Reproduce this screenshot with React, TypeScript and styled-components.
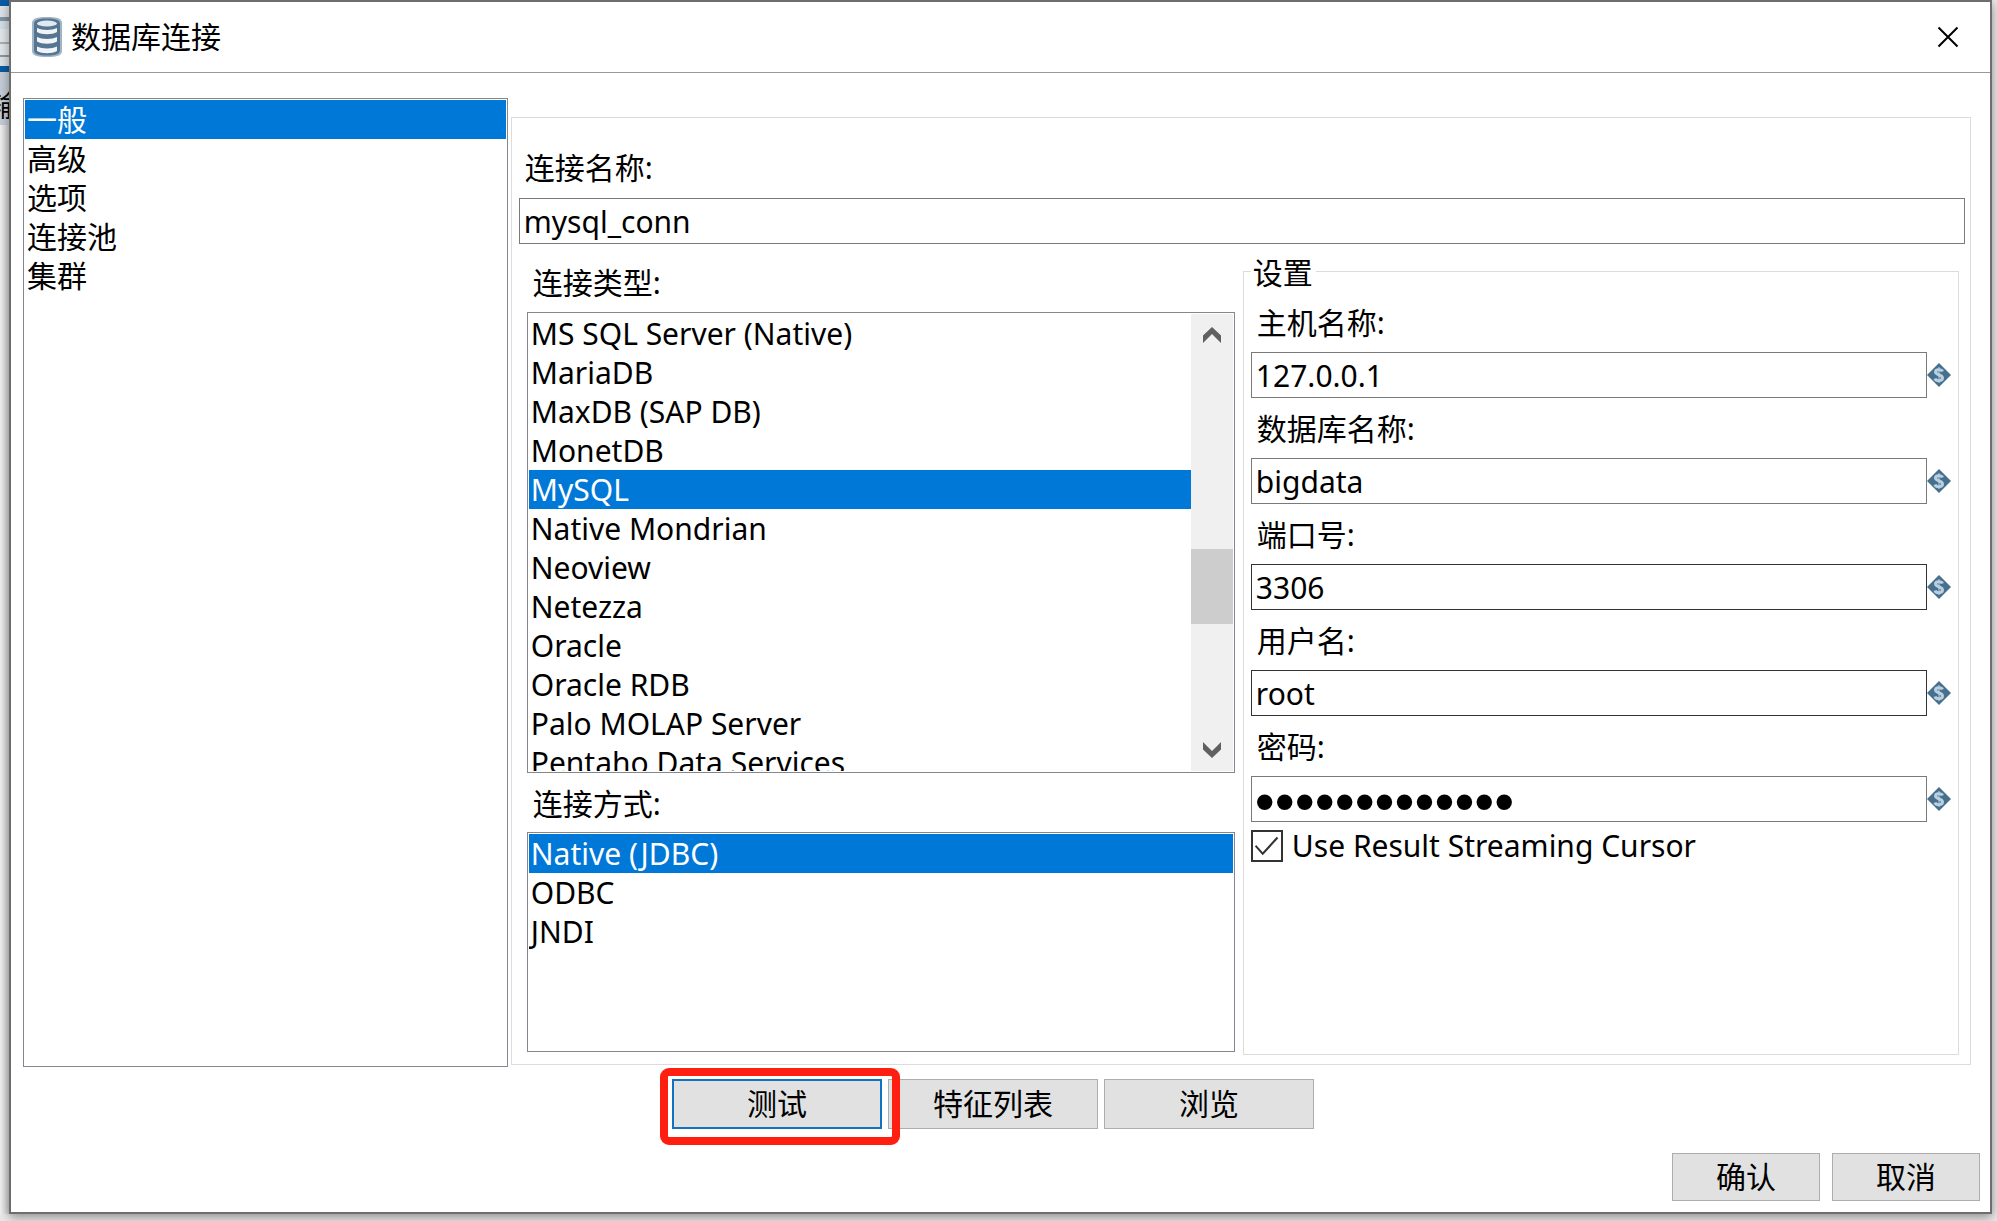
import React, { useState } from "react";
import styled, { createGlobalStyle } from "styled-components";

const GlobalStyle = createGlobalStyle`
  *, *::before, *::after { box-sizing: border-box; }
  html, body, #root { height: 100%; }
  body {
    margin: 0;
    background: #e9e9e9;
    color: #000;
    font: 30px/40px "Noto Sans", "Noto Sans CJK SC", sans-serif;
    overflow: hidden;
  }
  button, input { font: inherit; color: inherit; margin: 0; }
`;

const Desktop = styled.div`
  display: grid;
  grid-template-columns: 9px minmax(0, 1fr) 5px;
  height: 100vh;
  padding-bottom: 7px;
`;

const Behind = styled.div`
  overflow: hidden;
  background: linear-gradient(90deg, #f2f2f2, #cfcfcf);
`;

const RibbonEdge = styled.div`
  height: 72px;
  border-top: 6px solid #0a5ba3;
  border-bottom: 6px solid #0a5ba3;
  background: #dde3e8;
  padding-top: 11px;
`;

const RibbonCell = styled.div`
  height: 40px;
  border-top: 4px solid #8294a3;
  border-bottom: 2px solid #8a98a5;
  background: linear-gradient(#d3dee6 0 8px, #e4e7ea 8px 21px, #a8b0b8 21px 23px, #e4e7ea 23px);
`;

const BehindTab = styled.div`
  height: 53px;
  padding-top: 13px;
  background: #c4ced8;
  display: flex;
  justify-content: center;
  white-space: nowrap;
`;

const Dialog = styled.main`
  display: flex;
  flex-direction: column;
  min-width: 0;
  background: #fff;
  border: 2px solid #6e6e6e;
  box-shadow: 0 3px 10px rgba(0, 0, 0, 0.4);
  z-index: 1;
`;

const TitleBar = styled.header`
  display: flex;
  align-items: center;
  height: 71px;
  padding: 0 31px 0 21px;
  border-bottom: 1px solid #999;
`;

const Title = styled.h1`
  flex: 1;
  margin: 0 0 0 9px;
  font: inherit;
`;

const CloseButton = styled.button`
  display: flex;
  padding: 0;
  border: 0;
  background: none;
`;

const Body = styled.div`
  flex: 1;
  display: grid;
  grid-template-columns: 485fr 1461fr;
  gap: 3px;
  min-height: 0;
  padding: 25px 19px 0 12px;
`;

const ListBox = styled.div`
  display: flex;
  min-width: 0;
  min-height: 0;
  border: 1px solid #828790;
  padding: 1px;
`;

const TypeBox = styled(ListBox)`
  height: 461px;
`;

const MethodBox = styled(ListBox)`
  flex: 1;
`;

const Items = styled.ul`
  flex: 1;
  min-width: 0;
  margin: 0;
  padding: 0;
  list-style: none;
  overflow: hidden;
`;

const Item = styled.button<{ $on: boolean }>`
  display: block;
  width: 100%;
  height: 39px;
  padding: 0 2px;
  border: 0;
  line-height: 40px;
  text-align: left;
  white-space: nowrap;
  background: ${(p) => (p.$on ? "#0078d7" : "transparent")};
  color: ${(p) => (p.$on ? "#fff" : "#000")};
`;

const ScrollBar = styled.div`
  flex: 0 0 42px;
  display: flex;
  flex-direction: column;
  background: #f0f0f0;
`;

const ScrollButton = styled.button`
  display: flex;
  align-items: center;
  justify-content: center;
  width: 42px;
  height: 42px;
  padding: 0;
  border: 0;
  background: none;
`;

const Track = styled.div`
  flex: 1;
  display: grid;
  grid-template-rows: 193fr 75fr 105fr;
`;

const Thumb = styled.div`
  grid-row: 2;
  background: #cdcdcd;
`;

const Panel = styled.section`
  min-width: 0;
  display: flex;
  flex-direction: column;
  margin: 19px 0 2px;
  padding: 30px 5px 9px 7px;
  border: 1px solid #dcdcdc;
`;

const Caption = styled.label`
  display: block;
  height: 40px;
  padding-left: 6px;
`;

const Heading = styled.div`
  height: 40px;
  padding-left: 6px;
`;

const TextInput = styled.input<{ $dark?: boolean }>`
  flex: 1;
  width: 100%;
  min-width: 0;
  height: 46px;
  padding: 0 4px;
  border: 1px solid ${(p) => (p.$dark ? "#333" : "#7a7a7a")};
  border-radius: 0;
  background: #fff;
  outline: none;
  &[type="password"] {
    padding: 4px 3px 0;
    font: 57px/40px "Liberation Sans", sans-serif;
  }
`;

const NameField = styled.div`
  display: flex;
  flex-direction: column;
  gap: 10px;
  height: 96px;
`;

const Columns = styled.div`
  flex: 1;
  min-height: 0;
  display: grid;
  grid-template-columns: 708fr 716fr;
  gap: 8px;
  padding: 0 6px 0 8px;
`;

const Connection = styled.div`
  display: flex;
  flex-direction: column;
  min-width: 0;
  min-height: 0;
  padding: 19px 0 3px;
`;

const ConnectionLabel = styled(Heading)`
  margin-bottom: 9px;
`;

const MethodLabel = styled(Heading)`
  margin: 11px 0 8px;
`;

const Settings = styled.fieldset`
  min-width: 0;
  margin: 7px 0 0;
  padding: 12px 7px 0;
  border: 1px solid #dcdcdc;
`;

const Legend = styled.legend`
  height: 40px;
  padding: 2px 3px 0 2px;
`;

const FieldList = styled.div`
  display: grid;
  gap: 11px;
`;

const FieldRow = styled.div`
  display: flex;
  align-items: center;
  margin-top: 9px;
`;

const VariableButton = styled.button`
  display: flex;
  padding: 0;
  border: 0;
  background: none;
`;

const CheckRow = styled.label`
  display: flex;
  align-items: center;
  gap: 9px;
  height: 40px;
  margin-top: 4px;
`;

const CheckBox = styled.input`
  appearance: none;
  flex: none;
  width: 32px;
  height: 32px;
  border: 2px solid #333;
  background: #fff;
  display: grid;
  place-items: center;
  &:checked::before {
    content: "";
    width: 26px;
    height: 26px;
    background: #333;
    clip-path: polygon(4% 52%, 9% 46%, 34% 74%, 88% 14%, 94% 20%, 34% 86%);
  }
`;

const Actions = styled.div`
  display: flex;
  justify-content: center;
  gap: 6px;
  padding: 12px 15px 0 0;
`;

const ActionButton = styled.button<{ $focus?: boolean }>`
  width: 210px;
  height: 50px;
  padding: 0;
  line-height: 44px;
  background: #e1e1e1;
  border: ${(p) => (p.$focus ? "2px solid #1173bf" : "1px solid #adadad")};
`;

const Marked = styled.div`
  position: relative;
  display: flex;
  &::after {
    content: "";
    position: absolute;
    inset: -11px -18px -16px -12px;
    border: 8px solid #ff1f10;
    border-radius: 9px;
    pointer-events: none;
  }
`;

const Footer = styled.footer`
  display: flex;
  justify-content: flex-end;
  gap: 12px;
  padding: 24px 10px 11px;
`;

const FooterButton = styled(ActionButton)`
  width: 148px;
  height: 48px;
`;

const DatabaseIcon = () => (
  <svg width="30" height="40" viewBox="0 0 30 40" aria-hidden="true">
    <path d="M0 6C0 1.500 5 0 15 0s15 1.500 15 6v28c0 4.500-5 6-15 6S0 38.500 0 34z" fill="#9fb5c6" />
    <path d="M2 7C2 3 6 1.500 15 1.500S28 3 28 7v26c0 4-4 5.500-13 5.500S2 37 2 33z" fill="#557590" />
    <ellipse cx="15" cy="6.500" rx="10" ry="3" fill="#dfe9f1" />
    <path d="M5 11c5 2.500 15 2.500 20 0v4c-5 3-15 3-20 0z" fill="#eef4f8" />
    <path d="M5 20c5 2.500 15 2.500 20 0v4.500c-5 3-15 3-20 0z" fill="#eef4f8" />
    <path d="M5 29.500c5 2.500 15 2.500 20 0v4.500c-5 3-15 3-20 0z" fill="#eef4f8" />
  </svg>
);

const VariableIcon = () => (
  <svg width="24" height="24" viewBox="0 0 24 24" aria-hidden="true">
    <path d="M12 0l12 12-12 12L0 12z" fill="#47708e" />
    <path d="M15.500 8.500C14.500 6 8.500 6 8.500 9s7 2.500 7 6-6.500 3.500-7.500.5" fill="none" stroke="#b9d0e0" strokeWidth="3" />
    <path d="M12 4v16" fill="none" stroke="#b9d0e0" strokeWidth="1" />
  </svg>
);

const Chevron = ({ down = false }: { down?: boolean }) => (
  <svg width="20" height="18" viewBox="0 0 20 18" aria-hidden="true">
    <path d={down ? "M1 1l9 9 9-9v7.500L10 17 1 8.500z" : "M1 17l9-9 9 9V9.500L10 1 1 9.500z"} fill="#606060" />
  </svg>
);

const sections = ["一般", "高级", "选项", "连接池", "集群"];
const types = [
  "MS SQL Server (Native)", "MariaDB", "MaxDB (SAP DB)", "MonetDB", "MySQL", "Native Mondrian",
  "Neoview", "Netezza", "Oracle", "Oracle RDB", "Palo MOLAP Server", "Pentaho Data Services",
];
const methods = ["Native (JDBC)", "ODBC", "JNDI"];
const fields = [
  { id: "host", label: "主机名称:", value: "127.0.0.1" },
  { id: "database", label: "数据库名称:", value: "bigdata" },
  { id: "port", label: "端口号:", value: "3306", dark: true },
  { id: "user", label: "用户名:", value: "root", dark: true },
  { id: "password", label: "密码:", value: "1234567890123", type: "password" },
];

function Choices({ items, initial }: { items: string[]; initial: string }) {
  const [selected, setSelected] = useState(initial);
  return (
    <Items>
      {items.map((name) => (
        <li key={name}>
          <Item type="button" $on={name === selected} aria-pressed={name === selected} onClick={() => setSelected(name)}>
            {name}
          </Item>
        </li>
      ))}
    </Items>
  );
}

export default function App() {
  return (
    <>
      <GlobalStyle />
      <Desktop>
        <Behind aria-hidden="true">
          <RibbonEdge><RibbonCell /></RibbonEdge>
          <BehindTab>输</BehindTab>
        </Behind>
        <Dialog>
          <TitleBar>
            <DatabaseIcon />
            <Title>数据库连接</Title>
            <CloseButton type="button" aria-label="关闭">
              <svg width="22" height="22" viewBox="0 0 22 22" aria-hidden="true">
                <path d="M1.500 1.500l19 19M20.500 1.500l-19 19" stroke="#000" strokeWidth="2" />
              </svg>
            </CloseButton>
          </TitleBar>
          <Body>
            <ListBox><Choices items={sections} initial="一般" /></ListBox>
            <Panel>
              <NameField>
                <Caption htmlFor="name">连接名称:</Caption>
                <TextInput id="name" defaultValue="mysql_conn" />
              </NameField>
              <Columns>
                <Connection>
                  <ConnectionLabel>连接类型:</ConnectionLabel>
                  <TypeBox>
                    <Choices items={types} initial="MySQL" />
                    <ScrollBar>
                      <ScrollButton type="button" aria-label="向上"><Chevron /></ScrollButton>
                      <Track><Thumb /></Track>
                      <ScrollButton type="button" aria-label="向下"><Chevron down /></ScrollButton>
                    </ScrollBar>
                  </TypeBox>
                  <MethodLabel>连接方式:</MethodLabel>
                  <MethodBox><Choices items={methods} initial="Native (JDBC)" /></MethodBox>
                </Connection>
                <Settings>
                  <Legend>设置</Legend>
                  <FieldList>
                    {fields.map((f) => (
                      <div key={f.id}>
                        <Caption htmlFor={f.id}>{f.label}</Caption>
                        <FieldRow>
                          <TextInput id={f.id} type={f.type ?? "text"} defaultValue={f.value} $dark={f.dark} />
                          <VariableButton type="button" aria-label="变量"><VariableIcon /></VariableButton>
                        </FieldRow>
                      </div>
                    ))}
                  </FieldList>
                  <CheckRow>
                    <CheckBox type="checkbox" defaultChecked />
                    Use Result Streaming Cursor
                  </CheckRow>
                </Settings>
              </Columns>
            </Panel>
          </Body>
          <Actions>
            <Marked><ActionButton type="button" $focus>测试</ActionButton></Marked>
            <ActionButton type="button">特征列表</ActionButton>
            <ActionButton type="button">浏览</ActionButton>
          </Actions>
          <Footer>
            <FooterButton type="button">确认</FooterButton>
            <FooterButton type="button">取消</FooterButton>
          </Footer>
        </Dialog>
      </Desktop>
    </>
  );
}
